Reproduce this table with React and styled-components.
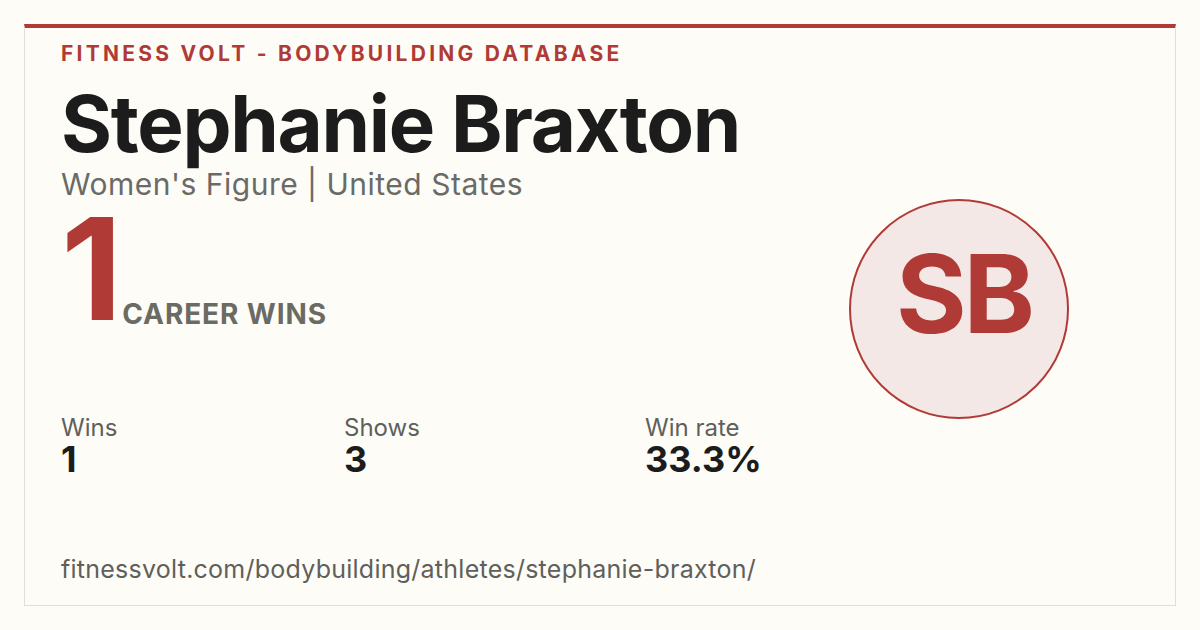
import React from "react";
import styled, { createGlobalStyle } from "styled-components";

const Global = createGlobalStyle`
  html, body { margin: 0; padding: 0; background: #fdfcf7; }
  body { font-family: Inter, "Noto Sans", sans-serif; }
`;

const Page = styled.div`
  width: 1200px;
  height: 630px;
  box-sizing: border-box;
  padding: 24px;
  background: #fdfcf7;
`;

const Card = styled.div`
  height: 100%;
  box-sizing: border-box;
  border: 1px solid #e2dfd8;
  border-top: 4px solid #b03a35;
  padding: 14px 106px 0 36px;
  display: flex;
  align-items: flex-start;
`;

const Left = styled.div`
  flex: 1;
  display: flex;
  flex-direction: column;
`;

const Kicker = styled.div`
  color: #b03a35;
  font-size: 21px;
  line-height: 24px;
  font-weight: 700;
  letter-spacing: 3.25px;
  text-transform: uppercase;
`;

const Name = styled.h1`
  margin: 17px 0 0;
  color: #1c1c1c;
  font-size: 78px;
  line-height: 82px;
  font-weight: 700;
  letter-spacing: -1.3px;
`;

const Sub = styled.div`
  margin-top: 2px;
  color: #6a6a66;
  font-size: 30px;
  line-height: 34px;
  font-weight: 400;
  letter-spacing: 0.5px;
`;

const WinsRow = styled.div`
  display: flex;
  align-items: flex-end;
  gap: 8px;
  margin-top: 7px;
`;

const BigNum = styled.div`
  color: #b03a35;
  font-size: 142px;
  line-height: 120px;
  font-weight: 700;
  letter-spacing: -8px;
`;

const BigLabel = styled.div`
  color: #6b6b64;
  font-size: 28px;
  line-height: 28px;
  font-weight: 700;
  letter-spacing: 0.9px;
  text-transform: uppercase;
`;

const Stats = styled.div`
  display: grid;
  grid-template-columns: 283px 301px auto;
  margin-top: 87px;
`;

const Stat = styled.div`
  display: flex;
  flex-direction: column;
`;

const StatLabel = styled.div`
  color: #5f5f5b;
  font-size: 24px;
  line-height: 26px;
  font-weight: 400;
`;

const StatValue = styled.div`
  color: #1c1c1c;
  font-size: 36px;
  line-height: 36px;
  font-weight: 700;
`;

const Url = styled.div`
  margin-top: 78px;
  color: #5f5f5b;
  font-size: 25px;
  line-height: 28px;
  letter-spacing: 0.25px;
`;

const Right = styled.div`
  align-self: center;
  margin-top: -30px;
`;

const Avatar = styled.div`
  width: 220px;
  height: 220px;
  box-sizing: border-box;
  padding: 0 0 30px 10px;
  border-radius: 50%;
  border: 2px solid #b03a35;
  background: #f4e8e6;
  display: flex;
  align-items: center;
  justify-content: center;
  color: #b03a35;
  font-size: 108px;
  font-weight: 700;
  letter-spacing: -3px;
`;

const stats = [
  { label: "Wins", value: "1" },
  { label: "Shows", value: "3" },
  { label: "Win rate", value: "33.3%" },
];

export default function App() {
  return (
    <Page>
      <Global />
      <Card>
        <Left>
          <Kicker>Fitness Volt - Bodybuilding Database</Kicker>
          <Name>Stephanie Braxton</Name>
          <Sub>Women's Figure | United States</Sub>
          <WinsRow>
            <BigNum>1</BigNum>
            <BigLabel>Career Wins</BigLabel>
          </WinsRow>
          <Stats>
            {stats.map((s) => (
              <Stat key={s.label}>
                <StatLabel>{s.label}</StatLabel>
                <StatValue>{s.value}</StatValue>
              </Stat>
            ))}
          </Stats>
          <Url>fitnessvolt.com/bodybuilding/athletes/stephanie-braxton/</Url>
        </Left>
        <Right>
          <Avatar>SB</Avatar>
        </Right>
      </Card>
    </Page>
  );
}
